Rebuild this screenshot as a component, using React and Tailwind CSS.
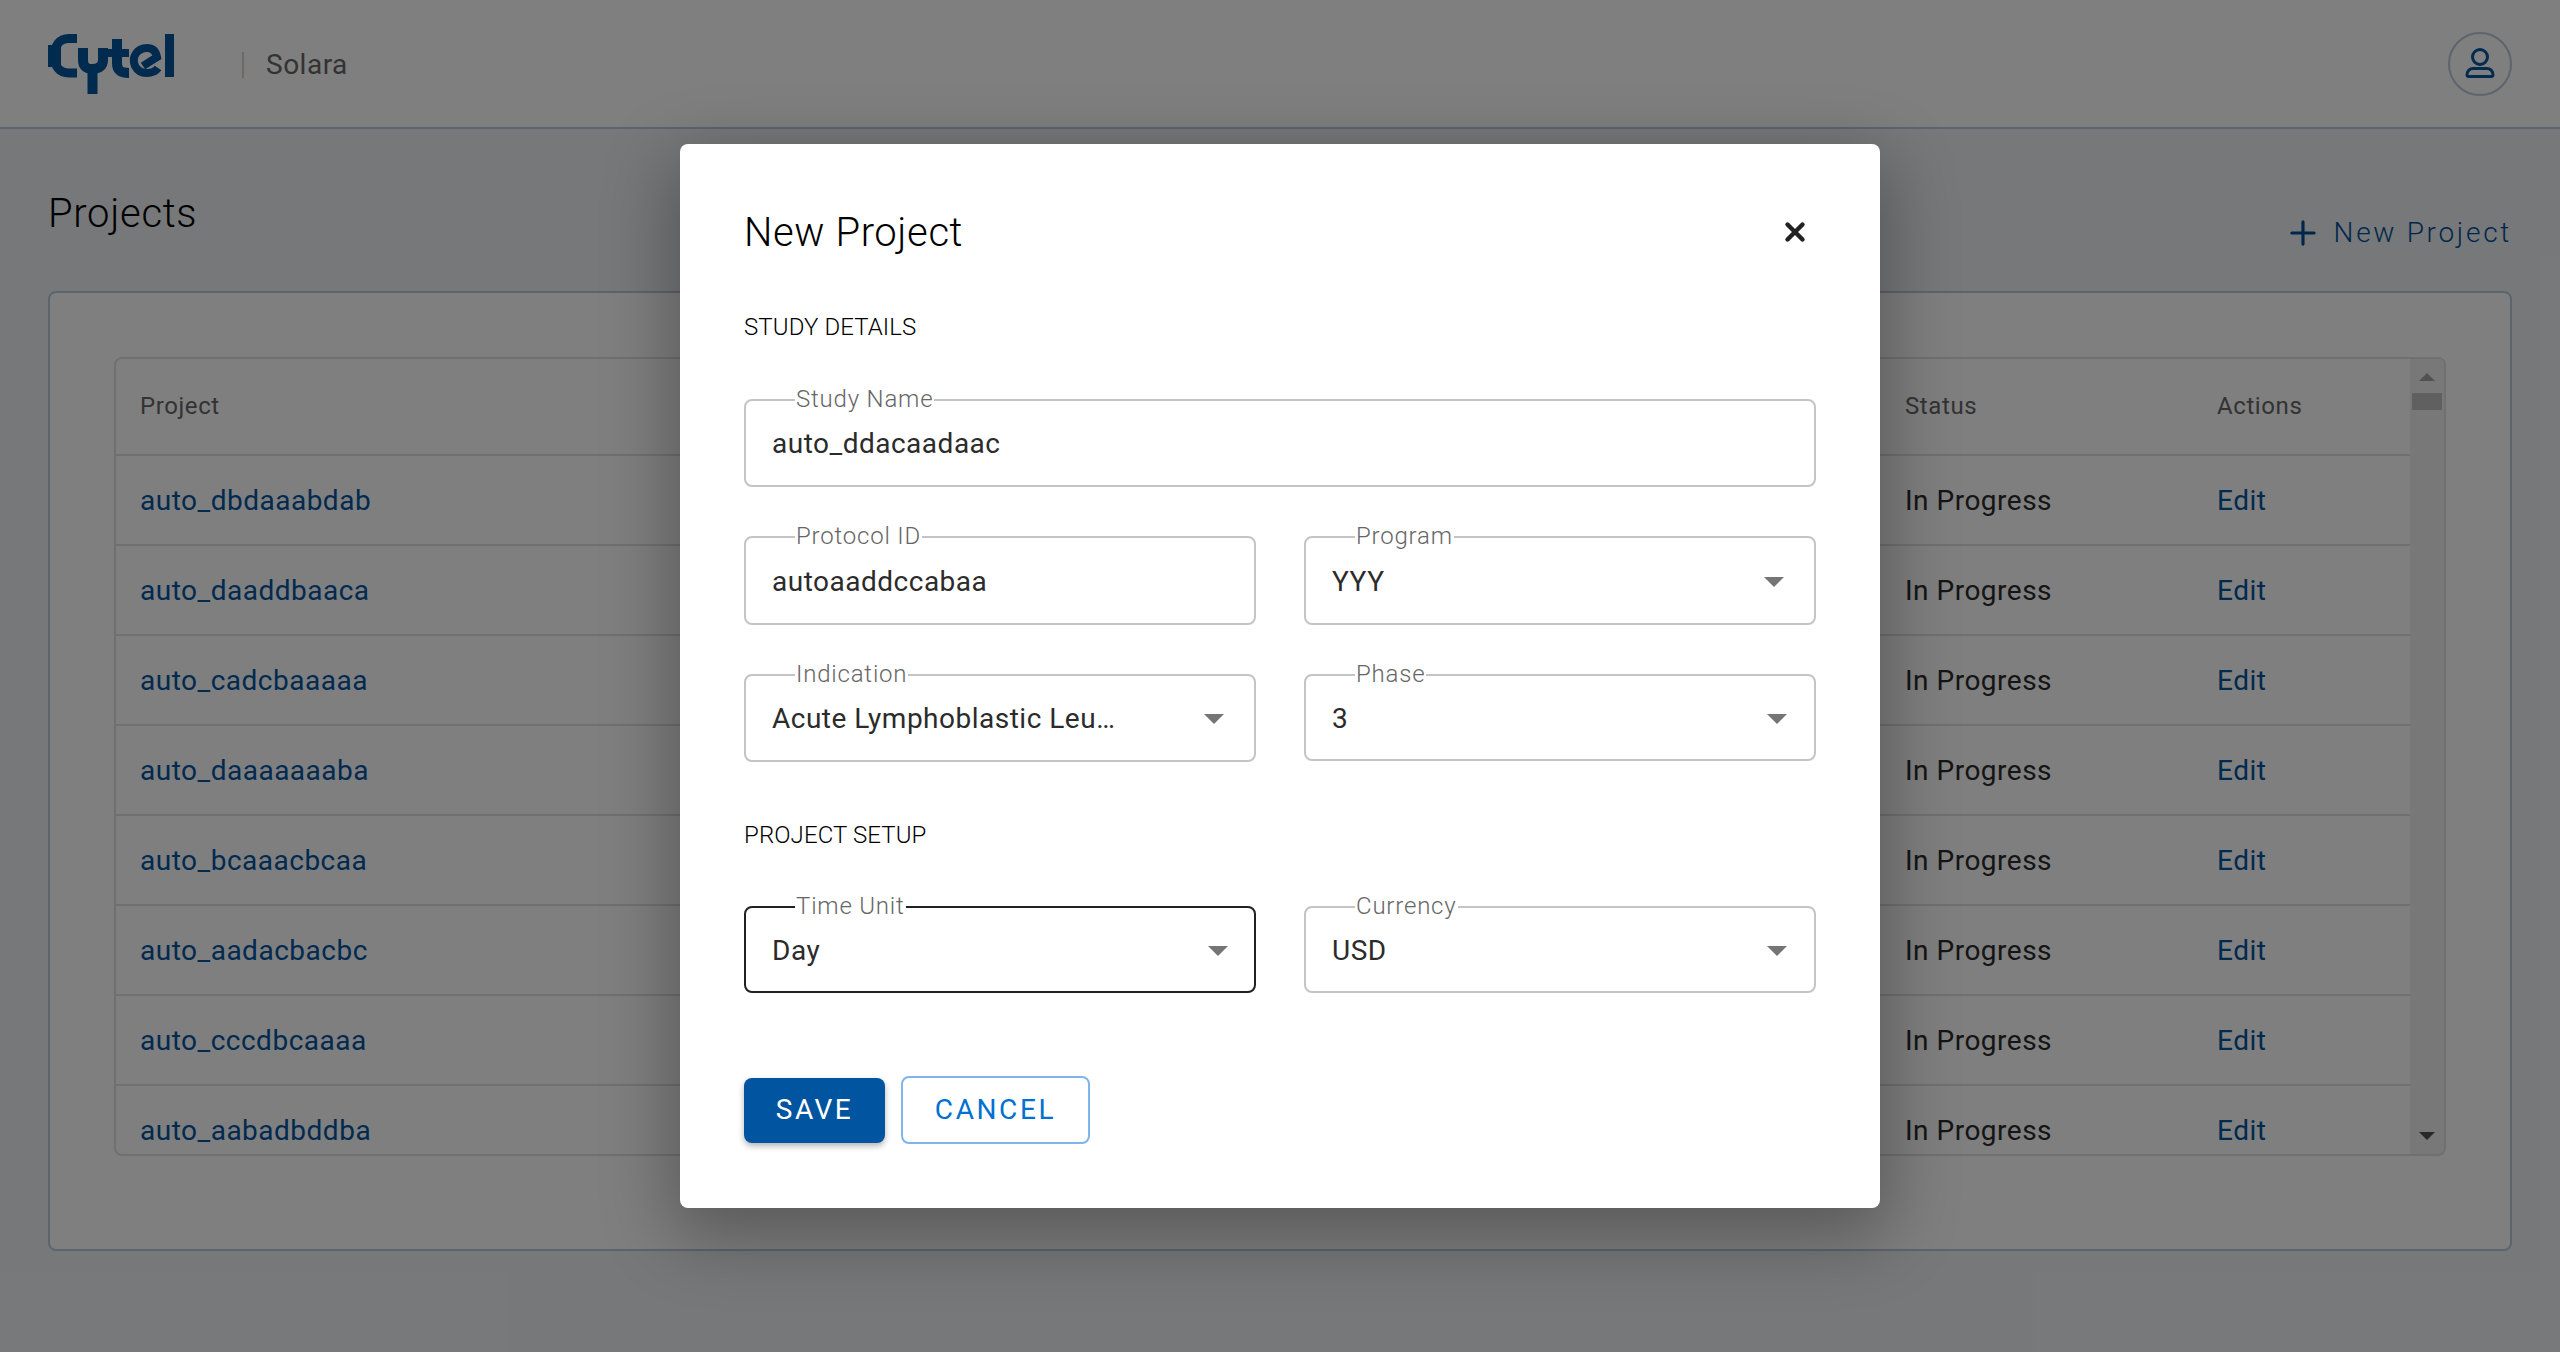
import React from "react";
import { Plus, X } from "lucide-react";

const projects = [
  "auto_dbdaaabdab",
  "auto_daaddbaaca",
  "auto_cadcbaaaaa",
  "auto_daaaaaaaba",
  "auto_bcaaacbcaa",
  "auto_aadacbacbc",
  "auto_cccdbcaaaa",
  "auto_aabadbddba",
];

const Logo = () => (
  <svg width="126" height="62" viewBox="0 0 126 62" fill="none" stroke="#00569f" strokeWidth="10">
    <path d="M29 5.5H21C11 5.5 6.5 13 6.5 23C6.5 33 11 40 21 40H29" strokeWidth="9" />
    <path d="M6.5 12V34" strokeWidth="13" />
    <path d="M35 15V27C35 33 38 36 44.5 36C51 36 55 33 55 27V15" />
    <path d="M44.5 34V61" />
    <path d="M69 6V30C69 37 72 40 81 40" />
    <path d="M60 20H81" strokeWidth="8" />
    <path d="M110 35C106 41 92 43 87 33C83 23 90 15 99 15C105 15 108 19 109 24L95 33" strokeWidth="8" />
    <path d="M121.5 1V44" strokeWidth="9" />
  </svg>
);

const UserIcon = () => (
  <svg width="30" height="31" viewBox="0 0 30 31" fill="none" stroke="#00569f" strokeWidth="3">
    <circle cx="15" cy="9" r="7.5" />
    <path d="M8 20.5H22C25 20.5 28 23 28 26.5C28 28 27 28.5 26 28.5H4C3 28.5 2 28 2 26.5C2 23 5 20.5 8 20.5Z" />
  </svg>
);

const Caret = ({ className }) => (
  <div className={`w-0 h-0 border-x-[10px] border-x-transparent border-t-[10px] border-t-[#757575] ${className}`} />
);

const Field = ({ label, value, select, focused, caretClass, className }) => (
  <div
    className={`relative rounded-lg border-2 flex items-center pl-[26px] pt-[2px] text-[28px] tracking-[0.5px] text-[#2b2b2b] ${
      focused ? "border-[#212121]" : "border-[#c4c4c4]"
    } ${className || "h-[88px]"}`}
  >
    <span className="absolute left-[49px] -top-[16px] bg-white px-[1px] text-[24px] leading-[28px] tracking-[0.8px] font-light text-[#666]">
      {label}
    </span>
    <span className="flex-1 truncate">{value}</span>
    {select && <Caret className={caretClass} />}
  </div>
);

export default function App() {
  return (
    <div className="relative h-screen overflow-hidden bg-[#eff1f4] font-['Roboto',sans-serif]">
      <header className="h-[129px] bg-white border-b-2 border-[#b8c9dc] flex items-center pl-[48px] pr-[48px]">
        <Logo />
        <div className="ml-[68px] w-[2px] h-[26px] bg-[#d8d2cf] mt-[2px]" />
        <span className="ml-[22px] text-[28px] tracking-[0.5px] text-[#666] mt-[2px]">Solara</span>
        <div className="ml-auto w-[64px] h-[64px] rounded-full border-2 border-[#b8c9dc] flex items-center justify-center">
          <UserIcon />
        </div>
      </header>

      <main className="pl-[48px] pr-[48px]">
        <div className="flex justify-between h-[162px]">
          <h1 className="mt-[61px] text-[40px] leading-[48px] font-light tracking-[0.7px] text-black">Projects</h1>
          <button className="mt-[84px] h-[40px] flex items-center gap-[12px] text-[#004f96] text-[28px] font-light tracking-[2.7px]">
            <Plus size={38} strokeWidth={2} />
            New Project
          </button>
        </div>

        <div className="h-[960px] rounded-lg border-2 border-[#b8c9dc] bg-white p-[64px]">
          <div className="relative h-[799px] rounded-lg border-2 border-[#e0e0e0] overflow-hidden pr-[34px]">
            <div className="grid grid-cols-[1fr_312px_192px] items-center h-[97px] border-b-2 border-[#e0e0e0] pl-[24px] pb-[2px] text-[24px] tracking-[0.6px] text-[#666]">
              <span>Project</span>
              <span className="-ml-[1px]">Status</span>
              <span className="-ml-[1px]">Actions</span>
            </div>
            {projects.map((name) => (
              <div
                key={name}
                className="grid grid-cols-[1fr_312px_192px] items-center h-[90px] border-b-2 border-[#e0e0e0] pl-[24px] pt-[2px] text-[28px] tracking-[0.5px] text-[#2b2b2b]"
              >
                <span className="text-[#01549f]">{name}</span>
                <span className="-ml-[1px]">In Progress</span>
                <span className="-ml-[1px] text-[#01549f]">Edit</span>
              </div>
            ))}
            <div className="absolute right-0 top-0 bottom-0 w-[34px] bg-[#f1f1f1] flex flex-col items-center">
              <div className="mt-[14px] w-0 h-0 border-x-[8px] border-x-transparent border-b-[8px] border-b-[#a3a3a3]" />
              <div className="mt-[12px] w-[30px] h-[17px] bg-[#c1c1c1]" />
              <div className="mt-auto mb-[14px] w-0 h-0 border-x-[8px] border-x-transparent border-t-[8px] border-t-[#505050]" />
            </div>
          </div>
        </div>
      </main>

      <div className="absolute inset-0 bg-black/50 flex items-center justify-center">
        <div className="w-[1200px] h-[1064px] bg-white rounded-lg px-[64px] pt-[64px] shadow-[0_22px_70px_8px_rgba(0,0,0,0.3)]">
          <div className="flex items-center justify-between h-[48px]">
            <h2 className="pt-[1px] text-[40px] leading-[48px] font-light tracking-[0.6px] text-black">New Project</h2>
            <X size={30} strokeWidth={3.5} className="text-[#212121] mr-[6px]" />
          </div>
          <p className="mt-[57px] text-[24px] leading-[28px] font-light tracking-[0.1px] text-black">STUDY DETAILS</p>
          <Field label="Study Name" value="auto_ddacaadaac" className="h-[88px] mt-[58px]" />
          <div className="grid grid-cols-2 items-start gap-x-[48px] gap-y-[49px] mt-[49px]">
            <Field label="Protocol ID" value="autoaaddccabaa" className="h-[89px]" />
            <Field label="Program" value="YYY" select caretClass="mr-[30px]" className="h-[89px]" />
            <Field label="Indication" value="Acute Lymphoblastic Leu…" select caretClass="mr-[30px]" className="h-[88px]" />
            <Field label="Phase" value="3" select caretClass="mr-[27px]" className="h-[87px]" />
          </div>
          <p className="mt-[59px] text-[24px] leading-[28px] font-light tracking-[0.1px] text-black">PROJECT SETUP</p>
          <div className="grid grid-cols-2 gap-x-[48px] mt-[57px]">
            <Field label="Time Unit" value="Day" select focused caretClass="mr-[26px]" className="h-[87px]" />
            <Field label="Currency" value="USD" select caretClass="mr-[27px]" className="h-[87px]" />
          </div>
          <div className="flex items-center gap-[16px] mt-[83px]">
            <button className="w-[141px] h-[65px] rounded-lg bg-[#01549f] text-white text-[28px] tracking-[2.5px] shadow-[0_3px_6px_rgba(0,0,0,0.3)]">
              SAVE
            </button>
            <button className="w-[189px] h-[68px] rounded-lg border-2 border-[#7fb5ea] text-[#0071d1] text-[28px] tracking-[2.6px]">
              CANCEL
            </button>
          </div>
        </div>
      </div>
    </div>
  );
}
